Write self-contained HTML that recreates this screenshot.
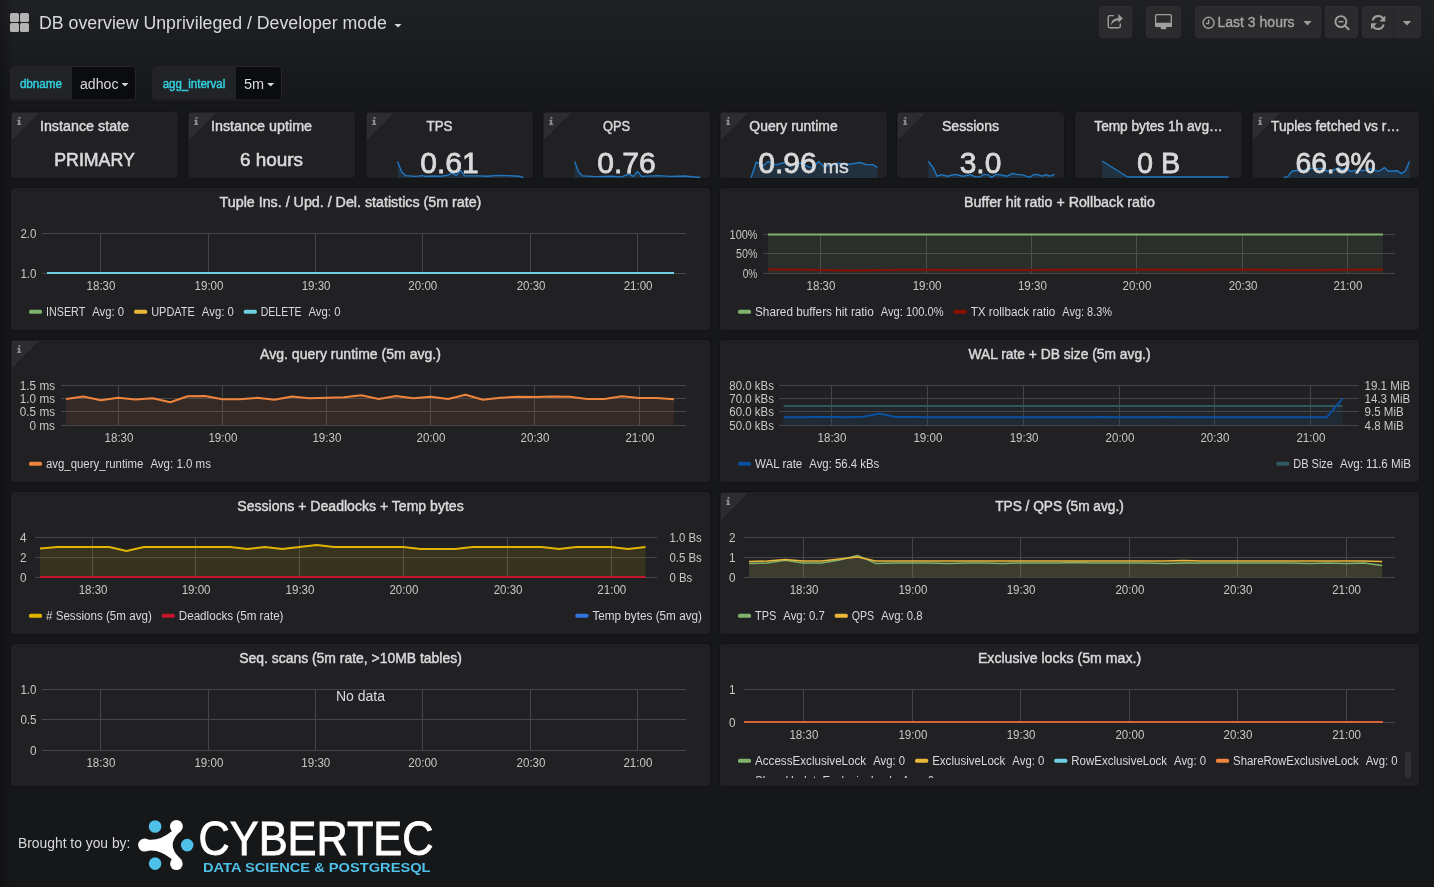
<!DOCTYPE html><html><head><meta charset="utf-8"><style>
html,body{margin:0;padding:0;}
body{width:1434px;height:887px;overflow:hidden;position:relative;background:#161719;font-family:"Liberation Sans",sans-serif;}
.bg{position:absolute;left:0;top:0;width:1434px;height:887px;background:linear-gradient(180deg,#1f2023 10px,#161719 100px);}
.sh{position:absolute;left:0;top:0;width:12px;height:887px;background:linear-gradient(90deg,rgba(0,0,0,0.25),rgba(0,0,0,0));}
svg{position:absolute;left:0;top:0;will-change:transform;}
text{font-family:"Liberation Sans",sans-serif;}
</style></head><body><div class="bg"></div><div class="sh"></div>
<svg width="1434" height="887" viewBox="0 0 1434 887">
<rect x="10" y="13" width="9" height="9" rx="1.5" fill="#b3b3b3"/>
<rect x="20" y="13" width="9" height="9" rx="1.5" fill="#b3b3b3"/>
<rect x="10" y="23" width="9" height="9" rx="1.5" fill="#b3b3b3"/>
<rect x="20" y="23" width="9" height="9" rx="1.5" fill="#b3b3b3"/>
<text x="39.00" y="29.00" font-size="18" text-anchor="start" fill="#d8d9da" font-weight="normal" textLength="347.91" lengthAdjust="spacingAndGlyphs" >DB overview Unprivileged / Developer mode</text>
<path d="M394.5,24 h7 l-3.5,3.5 z" fill="#d8d9da"/>
<rect x="1099.5" y="6.5" width="32" height="31" rx="2.5" fill="#2b2b2e" stroke="#2f2f32" stroke-width="1"/>
<rect x="1146.5" y="6.5" width="34" height="31" rx="2.5" fill="#2b2b2e" stroke="#2f2f32" stroke-width="1"/>
<rect x="1195.5" y="6.5" width="125" height="31" rx="2.5" fill="#2b2b2e" stroke="#2f2f32" stroke-width="1"/>
<rect x="1325.5" y="6.5" width="32" height="31" rx="2.5" fill="#2b2b2e" stroke="#2f2f32" stroke-width="1"/>
<rect x="1362.5" y="6.5" width="58" height="31" rx="2.5" fill="#2b2b2e" stroke="#2f2f32" stroke-width="1"/>
<rect x="1393" y="7" width="1" height="30" fill="#242427"/>
<path d="M1113.8,15.6 h-4 a1.6,1.6 0 0 0 -1.6,1.6 v8.9 a1.6,1.6 0 0 0 1.6,1.6 h8.9 a1.6,1.6 0 0 0 1.6,-1.6 v-2.6" fill="none" stroke="#9f9f9f" stroke-width="1.4"/>
<path d="M1111.2,25.6 C1110.8,20.2 1114,18.2 1118.4,18.2 V13.9 L1122.8,18.4 L1118.4,22.7 V20.5 C1115,20.5 1112.6,22 1111.2,25.6 Z" fill="#9f9f9f"/>
<rect x="1155.6" y="14.6" width="15.7" height="11.6" rx="1.4" fill="none" stroke="#9f9f9f" stroke-width="1.3"/>
<rect x="1155" y="22.8" width="17" height="4.3" rx="1" fill="#9f9f9f"/><rect x="1160.8" y="27" width="5.4" height="2.2" fill="#9f9f9f"/>
<circle cx="1208.6" cy="22.8" r="5.5" fill="none" stroke="#9f9f9f" stroke-width="1.4"/><path d="M1208.6,19.6 v3.9 h-2.6" fill="none" stroke="#9f9f9f" stroke-width="1.3"/>
<text x="1217.50" y="26.70" font-size="14" text-anchor="start" fill="#a6a6a6" font-weight="normal" stroke="#a6a6a6" stroke-width="0.35" textLength="77.10" lengthAdjust="spacingAndGlyphs" >Last 3 hours</text>
<path d="M1303.4,20.9 h8.1 l-4.05,4.5 z" fill="#9f9f9f"/>
<circle cx="1340.9" cy="21.6" r="5.5" fill="none" stroke="#9f9f9f" stroke-width="1.9"/><rect x="1338.3" y="20.9" width="5.2" height="1.5" fill="#9f9f9f"/><path d="M1345,25.7 l3.6,3.6" stroke="#9f9f9f" stroke-width="2" stroke-linecap="round"/>
<g fill="none" stroke="#9f9f9f" stroke-width="2.1"><path d="M1372.6,20.6 a5.8,5.8 0 0 1 10.6,-1.8"/><path d="M1383.6,24.4 a5.8,5.8 0 0 1 -10.6,1.8"/></g>
<path d="M1385.3,15.6 v6 h-6 z" fill="#9f9f9f"/><path d="M1371,29.2 v-6 h6 z" fill="#9f9f9f"/>
<path d="M1402.8,20.9 h8.3 l-4.15,4.5 z" fill="#9f9f9f"/>
<rect x="10.5" y="66.5" width="125" height="33.5" rx="3" fill="#0b0c0e" stroke="#262628" stroke-width="1"/>
<path d="M72,67 H13.5 a2.5,2.5 0 0 0 -2.5,2.5 V97 a2.5,2.5 0 0 0 2.5,2.5 H72 z" fill="#222327"/>
<text x="41.00" y="87.50" font-size="12" text-anchor="middle" fill="#32d1df" font-weight="normal" stroke="#32d1df" stroke-width="0.45" textLength="42.22" lengthAdjust="spacingAndGlyphs" >dbname</text>
<text x="80.00" y="89.00" font-size="14" text-anchor="start" fill="#d8d9da" font-weight="normal" textLength="38.53" lengthAdjust="spacingAndGlyphs" >adhoc</text>
<path d="M121.53,83 h7 l-3.5,3.5 z" fill="#d8d9da"/>
<rect x="152.5" y="66.5" width="129" height="33.5" rx="3" fill="#0b0c0e" stroke="#262628" stroke-width="1"/>
<path d="M236,67 H155.5 a2.5,2.5 0 0 0 -2.5,2.5 V97 a2.5,2.5 0 0 0 2.5,2.5 H236 z" fill="#222327"/>
<text x="194.00" y="87.50" font-size="12" text-anchor="middle" fill="#32d1df" font-weight="normal" stroke="#32d1df" stroke-width="0.45" textLength="62.58" lengthAdjust="spacingAndGlyphs" >agg_interval</text>
<text x="244.00" y="89.00" font-size="14" text-anchor="start" fill="#d8d9da" font-weight="normal" textLength="20.13" lengthAdjust="spacingAndGlyphs" >5m</text>
<path d="M267.13,83 h7 l-3.5,3.5 z" fill="#d8d9da"/>
<rect x="10.50" y="111.50" width="168.00" height="67.00" rx="3.5" fill="#212124" stroke="#131315" stroke-width="1"/>
<path d="M12,113 L39,113 L12,140 Z" fill="#2d2d31"/>
<g fill="#8e8e8e" transform="translate(17,117)"><rect x="1.5" y="0" width="2" height="1.8" rx="0.6"/><path d="M0.3,2.8 h2.9 v3.9 h0.9 v1.3 h-3.9 v-1.3 h0.9 v-2.6 h-0.8 z"/></g>
<text x="84.50" y="131.00" font-size="14" text-anchor="middle" fill="#d8d9da" font-weight="normal" stroke="#d8d9da" stroke-width="0.45" textLength="89.16" lengthAdjust="spacingAndGlyphs" >Instance state</text>
<text x="94.50" y="166.00" font-size="18" text-anchor="middle" fill="#d8d9da" font-weight="normal" stroke="#d8d9da" stroke-width="0.6" textLength="80.47" lengthAdjust="spacingAndGlyphs" >PRIMARY</text>
<rect x="187.50" y="111.50" width="168.00" height="67.00" rx="3.5" fill="#212124" stroke="#131315" stroke-width="1"/>
<path d="M189,113 L216,113 L189,140 Z" fill="#2d2d31"/>
<g fill="#8e8e8e" transform="translate(194,117)"><rect x="1.5" y="0" width="2" height="1.8" rx="0.6"/><path d="M0.3,2.8 h2.9 v3.9 h0.9 v1.3 h-3.9 v-1.3 h0.9 v-2.6 h-0.8 z"/></g>
<text x="261.50" y="131.00" font-size="14" text-anchor="middle" fill="#d8d9da" font-weight="normal" stroke="#d8d9da" stroke-width="0.45" textLength="101.11" lengthAdjust="spacingAndGlyphs" >Instance uptime</text>
<text x="271.50" y="166.00" font-size="18" text-anchor="middle" fill="#d8d9da" font-weight="normal" stroke="#d8d9da" stroke-width="0.6" textLength="63.04" lengthAdjust="spacingAndGlyphs" >6 hours</text>
<rect x="365.50" y="111.50" width="168.00" height="67.00" rx="3.5" fill="#212124" stroke="#131315" stroke-width="1"/>
<polygon points="397.60,161.50 401.70,172.00 405.60,175.60 409.50,175.90 415.40,176.40 422.20,175.60 426.10,176.40 432.00,176.00 440.80,176.20 447.60,175.20 452.00,173.20 456.40,175.60 460.30,170.30 464.70,175.90 477.90,175.90 487.70,176.20 497.40,175.40 507.20,175.60 518.90,176.20 523.30,177.50 523.30,178.00 397.60,178.00" fill="#1f78c1" fill-opacity="0.18"/>
<polyline points="397.60,161.50 401.70,172.00 405.60,175.60 409.50,175.90 415.40,176.40 422.20,175.60 426.10,176.40 432.00,176.00 440.80,176.20 447.60,175.20 452.00,173.20 456.40,175.60 460.30,170.30 464.70,175.90 477.90,175.90 487.70,176.20 497.40,175.40 507.20,175.60 518.90,176.20 523.30,177.50" fill="none" stroke="#1f78c1" stroke-width="1.4" stroke-linejoin="round"/>
<path d="M367,113 L394,113 L367,140 Z" fill="#2d2d31"/>
<g fill="#8e8e8e" transform="translate(372,117)"><rect x="1.5" y="0" width="2" height="1.8" rx="0.6"/><path d="M0.3,2.8 h2.9 v3.9 h0.9 v1.3 h-3.9 v-1.3 h0.9 v-2.6 h-0.8 z"/></g>
<text x="439.50" y="131.00" font-size="14" text-anchor="middle" fill="#d8d9da" font-weight="normal" stroke="#d8d9da" stroke-width="0.45" textLength="25.90" lengthAdjust="spacingAndGlyphs" >TPS</text>
<text x="449.50" y="172.80" font-size="29" text-anchor="middle" fill="#d8d9da" font-weight="normal" stroke="#d8d9da" stroke-width="0.8" textLength="58.57" lengthAdjust="spacingAndGlyphs" >0.61</text>
<rect x="542.50" y="111.50" width="168.00" height="67.00" rx="3.5" fill="#212124" stroke="#131315" stroke-width="1"/>
<polygon points="574.60,161.50 578.70,172.00 582.60,175.90 596.30,176.60 611.00,176.20 621.70,176.90 629.00,173.90 633.40,176.40 637.50,171.50 641.70,176.40 658.80,175.60 669.50,176.40 684.20,176.00 700.30,177.50 700.30,178.00 574.60,178.00" fill="#1f78c1" fill-opacity="0.18"/>
<polyline points="574.60,161.50 578.70,172.00 582.60,175.90 596.30,176.60 611.00,176.20 621.70,176.90 629.00,173.90 633.40,176.40 637.50,171.50 641.70,176.40 658.80,175.60 669.50,176.40 684.20,176.00 700.30,177.50" fill="none" stroke="#1f78c1" stroke-width="1.4" stroke-linejoin="round"/>
<path d="M544,113 L571,113 L544,140 Z" fill="#2d2d31"/>
<g fill="#8e8e8e" transform="translate(549,117)"><rect x="1.5" y="0" width="2" height="1.8" rx="0.6"/><path d="M0.3,2.8 h2.9 v3.9 h0.9 v1.3 h-3.9 v-1.3 h0.9 v-2.6 h-0.8 z"/></g>
<text x="616.50" y="131.00" font-size="14" text-anchor="middle" fill="#d8d9da" font-weight="normal" stroke="#d8d9da" stroke-width="0.45" textLength="27.13" lengthAdjust="spacingAndGlyphs" >QPS</text>
<text x="626.50" y="172.80" font-size="29" text-anchor="middle" fill="#d8d9da" font-weight="normal" stroke="#d8d9da" stroke-width="0.8" textLength="58.57" lengthAdjust="spacingAndGlyphs" >0.76</text>
<rect x="719.50" y="111.50" width="168.00" height="67.00" rx="3.5" fill="#212124" stroke="#131315" stroke-width="1"/>
<polygon points="751.00,177.80 756.20,162.20 759.10,163.20 763.50,165.60 768.40,161.20 772.30,164.60 776.20,164.60 785.00,162.50 789.90,166.10 795.80,162.70 802.60,163.50 807.50,166.40 812.40,168.10 818.70,161.50 824.10,167.10 829.00,165.60 837.80,163.20 849.50,164.20 860.20,162.50 866.10,164.60 872.90,164.60 877.30,167.60 877.30,178.00 751.00,178.00" fill="#1f78c1" fill-opacity="0.18"/>
<polyline points="751.00,177.80 756.20,162.20 759.10,163.20 763.50,165.60 768.40,161.20 772.30,164.60 776.20,164.60 785.00,162.50 789.90,166.10 795.80,162.70 802.60,163.50 807.50,166.40 812.40,168.10 818.70,161.50 824.10,167.10 829.00,165.60 837.80,163.20 849.50,164.20 860.20,162.50 866.10,164.60 872.90,164.60 877.30,167.60" fill="none" stroke="#1f78c1" stroke-width="1.4" stroke-linejoin="round"/>
<path d="M721,113 L748,113 L721,140 Z" fill="#2d2d31"/>
<g fill="#8e8e8e" transform="translate(726,117)"><rect x="1.5" y="0" width="2" height="1.8" rx="0.6"/><path d="M0.3,2.8 h2.9 v3.9 h0.9 v1.3 h-3.9 v-1.3 h0.9 v-2.6 h-0.8 z"/></g>
<text x="793.50" y="131.00" font-size="14" text-anchor="middle" fill="#d8d9da" font-weight="normal" stroke="#d8d9da" stroke-width="0.45" textLength="88.29" lengthAdjust="spacingAndGlyphs" >Query runtime</text>
<text x="758.19" y="172.80" font-size="29" text-anchor="start" fill="#d8d9da" font-weight="normal" stroke="#d8d9da" stroke-width="0.8" textLength="58.57" lengthAdjust="spacingAndGlyphs" >0.96</text>
<text x="822.75" y="172.80" font-size="18" text-anchor="start" fill="#d8d9da" font-weight="normal" stroke="#d8d9da" stroke-width="0.5" textLength="26.06" lengthAdjust="spacingAndGlyphs" >ms</text>
<rect x="896.50" y="111.50" width="168.00" height="67.00" rx="3.5" fill="#212124" stroke="#131315" stroke-width="1"/>
<polygon points="928.30,161.20 933.20,167.60 937.10,176.20 941.50,174.60 947.40,176.20 955.20,174.40 963.00,176.20 970.80,174.60 975.20,176.90 979.60,176.90 984.50,174.40 988.40,174.90 991.30,177.30 996.20,174.40 1001.10,174.90 1006.90,176.20 1012.80,173.40 1016.70,174.40 1022.60,174.90 1029.40,177.30 1034.30,174.40 1038.20,174.60 1042.10,176.20 1046.00,174.60 1049.90,176.20 1054.60,174.40 1054.60,178.00 928.30,178.00" fill="#1f78c1" fill-opacity="0.18"/>
<polyline points="928.30,161.20 933.20,167.60 937.10,176.20 941.50,174.60 947.40,176.20 955.20,174.40 963.00,176.20 970.80,174.60 975.20,176.90 979.60,176.90 984.50,174.40 988.40,174.90 991.30,177.30 996.20,174.40 1001.10,174.90 1006.90,176.20 1012.80,173.40 1016.70,174.40 1022.60,174.90 1029.40,177.30 1034.30,174.40 1038.20,174.60 1042.10,176.20 1046.00,174.60 1049.90,176.20 1054.60,174.40" fill="none" stroke="#1f78c1" stroke-width="1.4" stroke-linejoin="round"/>
<path d="M898,113 L925,113 L898,140 Z" fill="#2d2d31"/>
<g fill="#8e8e8e" transform="translate(903,117)"><rect x="1.5" y="0" width="2" height="1.8" rx="0.6"/><path d="M0.3,2.8 h2.9 v3.9 h0.9 v1.3 h-3.9 v-1.3 h0.9 v-2.6 h-0.8 z"/></g>
<text x="970.50" y="131.00" font-size="14" text-anchor="middle" fill="#d8d9da" font-weight="normal" stroke="#d8d9da" stroke-width="0.45" textLength="57.16" lengthAdjust="spacingAndGlyphs" >Sessions</text>
<text x="980.50" y="172.80" font-size="29" text-anchor="middle" fill="#d8d9da" font-weight="normal" stroke="#d8d9da" stroke-width="0.8" textLength="41.63" lengthAdjust="spacingAndGlyphs" >3.0</text>
<rect x="1074.50" y="111.50" width="168.00" height="67.00" rx="3.5" fill="#212124" stroke="#131315" stroke-width="1"/>
<polygon points="1102.10,161.00 1127.60,177.00 1228.60,177.00 1228.60,178.00 1102.10,178.00" fill="#1f78c1" fill-opacity="0.18"/>
<polyline points="1102.10,161.00 1127.60,177.00 1228.60,177.00" fill="none" stroke="#1f78c1" stroke-width="1.4" stroke-linejoin="round"/>
<text x="1158.50" y="131.00" font-size="14" text-anchor="middle" fill="#d8d9da" font-weight="normal" stroke="#d8d9da" stroke-width="0.45" textLength="128.35" lengthAdjust="spacingAndGlyphs" >Temp bytes 1h avg…</text>
<text x="1158.50" y="172.80" font-size="29" text-anchor="middle" fill="#d8d9da" font-weight="normal" stroke="#d8d9da" stroke-width="0.8" textLength="43.18" lengthAdjust="spacingAndGlyphs" >0 B</text>
<rect x="1251.50" y="111.50" width="168.00" height="67.00" rx="3.5" fill="#212124" stroke="#131315" stroke-width="1"/>
<polygon points="1283.80,177.50 1287.70,176.60 1292.10,171.00 1297.50,170.50 1303.30,170.50 1311.20,168.10 1315.10,169.00 1320.90,168.10 1324.80,170.50 1330.70,171.50 1338.50,167.60 1342.40,170.00 1347.30,167.60 1350.20,171.50 1359.00,170.00 1363.90,170.70 1371.70,168.40 1375.60,170.70 1379.50,171.00 1384.40,167.60 1388.30,171.30 1397.10,170.70 1401.50,173.60 1405.40,170.70 1409.60,161.20 1409.60,178.00 1283.80,178.00" fill="#1f78c1" fill-opacity="0.18"/>
<polyline points="1283.80,177.50 1287.70,176.60 1292.10,171.00 1297.50,170.50 1303.30,170.50 1311.20,168.10 1315.10,169.00 1320.90,168.10 1324.80,170.50 1330.70,171.50 1338.50,167.60 1342.40,170.00 1347.30,167.60 1350.20,171.50 1359.00,170.00 1363.90,170.70 1371.70,168.40 1375.60,170.70 1379.50,171.00 1384.40,167.60 1388.30,171.30 1397.10,170.70 1401.50,173.60 1405.40,170.70 1409.60,161.20" fill="none" stroke="#1f78c1" stroke-width="1.4" stroke-linejoin="round"/>
<path d="M1253,113 L1280,113 L1253,140 Z" fill="#2d2d31"/>
<g fill="#8e8e8e" transform="translate(1258,117)"><rect x="1.5" y="0" width="2" height="1.8" rx="0.6"/><path d="M0.3,2.8 h2.9 v3.9 h0.9 v1.3 h-3.9 v-1.3 h0.9 v-2.6 h-0.8 z"/></g>
<text x="1335.50" y="131.00" font-size="14" text-anchor="middle" fill="#d8d9da" font-weight="normal" stroke="#d8d9da" stroke-width="0.45" textLength="128.85" lengthAdjust="spacingAndGlyphs" >Tuples fetched vs r…</text>
<text x="1335.50" y="172.80" font-size="29" text-anchor="middle" fill="#d8d9da" font-weight="normal" stroke="#d8d9da" stroke-width="0.8" textLength="80.14" lengthAdjust="spacingAndGlyphs" >66.9%</text>
<rect x="10.50" y="187.50" width="700.00" height="143.00" rx="3.5" fill="#212124" stroke="#131315" stroke-width="1"/>
<rect x="719.50" y="187.50" width="700.00" height="143.00" rx="3.5" fill="#212124" stroke="#131315" stroke-width="1"/>
<rect x="10.50" y="339.50" width="700.00" height="143.00" rx="3.5" fill="#212124" stroke="#131315" stroke-width="1"/>
<rect x="719.50" y="339.50" width="700.00" height="143.00" rx="3.5" fill="#212124" stroke="#131315" stroke-width="1"/>
<rect x="10.50" y="491.50" width="700.00" height="143.00" rx="3.5" fill="#212124" stroke="#131315" stroke-width="1"/>
<rect x="719.50" y="491.50" width="700.00" height="143.00" rx="3.5" fill="#212124" stroke="#131315" stroke-width="1"/>
<rect x="10.50" y="643.50" width="700.00" height="143.00" rx="3.5" fill="#212124" stroke="#131315" stroke-width="1"/>
<rect x="719.50" y="643.50" width="700.00" height="143.00" rx="3.5" fill="#212124" stroke="#131315" stroke-width="1"/>
<text x="350.50" y="207.20" font-size="14" text-anchor="middle" fill="#d8d9da" font-weight="normal" stroke="#d8d9da" stroke-width="0.45" textLength="261.77" lengthAdjust="spacingAndGlyphs" >Tuple Ins. / Upd. / Del. statistics (5m rate)</text>
<rect x="42" y="233" width="644" height="1" fill="#464648"/>
<rect x="42" y="273" width="644" height="1" fill="#464648"/>
<rect x="100" y="233" width="1" height="40" fill="#464648"/>
<rect x="208" y="233" width="1" height="40" fill="#464648"/>
<rect x="315" y="233" width="1" height="40" fill="#464648"/>
<rect x="422" y="233" width="1" height="40" fill="#464648"/>
<rect x="530" y="233" width="1" height="40" fill="#464648"/>
<rect x="637" y="233" width="1" height="40" fill="#464648"/>
<text x="36.50" y="237.80" font-size="12" text-anchor="end" fill="#c8c8c8" font-weight="normal" textLength="16.07" lengthAdjust="spacingAndGlyphs" >2.0</text>
<text x="36.50" y="277.80" font-size="12" text-anchor="end" fill="#c8c8c8" font-weight="normal" textLength="16.07" lengthAdjust="spacingAndGlyphs" >1.0</text>
<text x="101.00" y="290.30" font-size="12" text-anchor="middle" fill="#c8c8c8" font-weight="normal" textLength="28.90" lengthAdjust="spacingAndGlyphs" >18:30</text>
<text x="209.00" y="290.30" font-size="12" text-anchor="middle" fill="#c8c8c8" font-weight="normal" textLength="28.90" lengthAdjust="spacingAndGlyphs" >19:00</text>
<text x="316.10" y="290.30" font-size="12" text-anchor="middle" fill="#c8c8c8" font-weight="normal" textLength="28.90" lengthAdjust="spacingAndGlyphs" >19:30</text>
<text x="422.80" y="290.30" font-size="12" text-anchor="middle" fill="#c8c8c8" font-weight="normal" textLength="28.90" lengthAdjust="spacingAndGlyphs" >20:00</text>
<text x="531.10" y="290.30" font-size="12" text-anchor="middle" fill="#c8c8c8" font-weight="normal" textLength="28.90" lengthAdjust="spacingAndGlyphs" >20:30</text>
<text x="638.10" y="290.30" font-size="12" text-anchor="middle" fill="#c8c8c8" font-weight="normal" textLength="28.90" lengthAdjust="spacingAndGlyphs" >21:00</text>
<rect x="47" y="272" width="627" height="2" fill="#6ed0e0"/>
<rect x="29.00" y="309.80" width="13" height="4" rx="1.5" fill="#7eb26d"/>
<text x="46.00" y="316.10" font-size="12" text-anchor="start" fill="#d8d9da" font-weight="normal" textLength="39.21" lengthAdjust="spacingAndGlyphs" >INSERT</text>
<text x="92.21" y="316.10" font-size="12" text-anchor="start" fill="#d8d9da" font-weight="normal" textLength="31.94" lengthAdjust="spacingAndGlyphs" >Avg: 0</text>
<rect x="134.15" y="309.80" width="13" height="4" rx="1.5" fill="#eab839"/>
<text x="151.15" y="316.10" font-size="12" text-anchor="start" fill="#d8d9da" font-weight="normal" textLength="43.71" lengthAdjust="spacingAndGlyphs" >UPDATE</text>
<text x="201.86" y="316.10" font-size="12" text-anchor="start" fill="#d8d9da" font-weight="normal" textLength="31.94" lengthAdjust="spacingAndGlyphs" >Avg: 0</text>
<rect x="243.80" y="309.80" width="13" height="4" rx="1.5" fill="#6ed0e0"/>
<text x="260.80" y="316.10" font-size="12" text-anchor="start" fill="#d8d9da" font-weight="normal" textLength="40.73" lengthAdjust="spacingAndGlyphs" >DELETE</text>
<text x="308.52" y="316.10" font-size="12" text-anchor="start" fill="#d8d9da" font-weight="normal" textLength="31.94" lengthAdjust="spacingAndGlyphs" >Avg: 0</text>
<text x="1059.50" y="207.20" font-size="14" text-anchor="middle" fill="#d8d9da" font-weight="normal" stroke="#d8d9da" stroke-width="0.45" textLength="190.86" lengthAdjust="spacingAndGlyphs" >Buffer hit ratio + Rollback ratio</text>
<rect x="763" y="234" width="632" height="1" fill="#464648"/>
<rect x="763" y="253" width="632" height="1" fill="#464648"/>
<rect x="763" y="273" width="632" height="1" fill="#464648"/>
<rect x="820" y="234" width="1" height="39" fill="#464648"/>
<rect x="926" y="234" width="1" height="39" fill="#464648"/>
<rect x="1031" y="234" width="1" height="39" fill="#464648"/>
<rect x="1136" y="234" width="1" height="39" fill="#464648"/>
<rect x="1242" y="234" width="1" height="39" fill="#464648"/>
<rect x="1347" y="234" width="1" height="39" fill="#464648"/>
<rect x="768" y="234" width="615" height="39" fill="#7eb26d" fill-opacity="0.1"/>
<rect x="768" y="270" width="615" height="3" fill="#890f02" fill-opacity="0.1"/>
<rect x="768" y="233.5" width="615" height="2" fill="#7eb26d"/>
<polyline points="768.00,269.20 810.00,269.80 850.00,270.60 900.00,269.80 1000.00,270.00 1100.00,269.50 1200.00,269.80 1240.00,269.40 1300.00,269.90 1383.00,269.60" fill="none" stroke="#890f02" stroke-width="2" stroke-linejoin="round"/>
<text x="757.50" y="239.30" font-size="12" text-anchor="end" fill="#c8c8c8" font-weight="normal" textLength="27.93" lengthAdjust="spacingAndGlyphs" >100%</text>
<text x="757.50" y="258.20" font-size="12" text-anchor="end" fill="#c8c8c8" font-weight="normal" textLength="21.40" lengthAdjust="spacingAndGlyphs" >50%</text>
<text x="757.50" y="277.80" font-size="12" text-anchor="end" fill="#c8c8c8" font-weight="normal" textLength="14.86" lengthAdjust="spacingAndGlyphs" >0%</text>
<text x="821.00" y="290.30" font-size="12" text-anchor="middle" fill="#c8c8c8" font-weight="normal" textLength="28.90" lengthAdjust="spacingAndGlyphs" >18:30</text>
<text x="927.10" y="290.30" font-size="12" text-anchor="middle" fill="#c8c8c8" font-weight="normal" textLength="28.90" lengthAdjust="spacingAndGlyphs" >19:00</text>
<text x="1032.40" y="290.30" font-size="12" text-anchor="middle" fill="#c8c8c8" font-weight="normal" textLength="28.90" lengthAdjust="spacingAndGlyphs" >19:30</text>
<text x="1137.00" y="290.30" font-size="12" text-anchor="middle" fill="#c8c8c8" font-weight="normal" textLength="28.90" lengthAdjust="spacingAndGlyphs" >20:00</text>
<text x="1243.10" y="290.30" font-size="12" text-anchor="middle" fill="#c8c8c8" font-weight="normal" textLength="28.90" lengthAdjust="spacingAndGlyphs" >20:30</text>
<text x="1347.90" y="290.30" font-size="12" text-anchor="middle" fill="#c8c8c8" font-weight="normal" textLength="28.90" lengthAdjust="spacingAndGlyphs" >21:00</text>
<rect x="738.00" y="309.80" width="13" height="4" rx="1.5" fill="#7eb26d"/>
<text x="755.00" y="316.10" font-size="12" text-anchor="start" fill="#d8d9da" font-weight="normal" textLength="118.76" lengthAdjust="spacingAndGlyphs" >Shared buffers hit ratio</text>
<text x="880.76" y="316.10" font-size="12" text-anchor="start" fill="#d8d9da" font-weight="normal" textLength="62.87" lengthAdjust="spacingAndGlyphs" >Avg: 100.0%</text>
<rect x="953.63" y="309.80" width="13" height="4" rx="1.5" fill="#890f02"/>
<text x="970.63" y="316.10" font-size="12" text-anchor="start" fill="#d8d9da" font-weight="normal" textLength="84.66" lengthAdjust="spacingAndGlyphs" >TX rollback ratio</text>
<text x="1062.29" y="316.10" font-size="12" text-anchor="start" fill="#d8d9da" font-weight="normal" textLength="49.79" lengthAdjust="spacingAndGlyphs" >Avg: 8.3%</text>
<path d="M12,341 L39,341 L12,368 Z" fill="#2d2d31"/>
<g fill="#8e8e8e" transform="translate(17,345)"><rect x="1.5" y="0" width="2" height="1.8" rx="0.6"/><path d="M0.3,2.8 h2.9 v3.9 h0.9 v1.3 h-3.9 v-1.3 h0.9 v-2.6 h-0.8 z"/></g>
<text x="350.50" y="359.20" font-size="14" text-anchor="middle" fill="#d8d9da" font-weight="normal" stroke="#d8d9da" stroke-width="0.45" textLength="180.73" lengthAdjust="spacingAndGlyphs" >Avg. query runtime (5m avg.)</text>
<rect x="61" y="385" width="625" height="1" fill="#464648"/>
<rect x="61" y="398" width="625" height="1" fill="#464648"/>
<rect x="61" y="411" width="625" height="1" fill="#464648"/>
<rect x="61" y="425" width="625" height="1" fill="#464648"/>
<rect x="118" y="385" width="1" height="40" fill="#464648"/>
<rect x="222" y="385" width="1" height="40" fill="#464648"/>
<rect x="326" y="385" width="1" height="40" fill="#464648"/>
<rect x="430" y="385" width="1" height="40" fill="#464648"/>
<rect x="534" y="385" width="1" height="40" fill="#464648"/>
<rect x="639" y="385" width="1" height="40" fill="#464648"/>
<polygon points="66.00,399.00 83.37,396.50 100.74,400.30 118.11,397.80 135.49,399.50 152.86,398.30 170.23,402.30 187.60,396.30 204.97,396.00 222.34,399.30 239.71,399.30 257.09,397.80 274.46,399.80 291.83,396.50 309.20,398.30 326.57,397.80 343.94,397.30 361.31,395.30 378.69,399.00 396.06,396.00 413.43,398.30 430.80,396.80 448.17,399.00 465.54,394.80 482.91,399.80 500.29,397.80 517.66,396.80 535.03,397.00 552.40,396.50 569.77,396.80 587.14,399.00 604.51,399.00 621.89,396.30 639.26,398.00 656.63,398.00 674.00,399.30 674.00,425.00 66.00,425.00" fill="#ef843c" fill-opacity="0.1"/>
<polyline points="66.00,399.00 83.37,396.50 100.74,400.30 118.11,397.80 135.49,399.50 152.86,398.30 170.23,402.30 187.60,396.30 204.97,396.00 222.34,399.30 239.71,399.30 257.09,397.80 274.46,399.80 291.83,396.50 309.20,398.30 326.57,397.80 343.94,397.30 361.31,395.30 378.69,399.00 396.06,396.00 413.43,398.30 430.80,396.80 448.17,399.00 465.54,394.80 482.91,399.80 500.29,397.80 517.66,396.80 535.03,397.00 552.40,396.50 569.77,396.80 587.14,399.00 604.51,399.00 621.89,396.30 639.26,398.00 656.63,398.00 674.00,399.30" fill="none" stroke="#ef843c" stroke-width="2" stroke-linejoin="round"/>
<text x="55.00" y="389.80" font-size="12" text-anchor="end" fill="#c8c8c8" font-weight="normal" textLength="35.15" lengthAdjust="spacingAndGlyphs" >1.5 ms</text>
<text x="55.00" y="402.80" font-size="12" text-anchor="end" fill="#c8c8c8" font-weight="normal" textLength="35.15" lengthAdjust="spacingAndGlyphs" >1.0 ms</text>
<text x="55.00" y="415.80" font-size="12" text-anchor="end" fill="#c8c8c8" font-weight="normal" textLength="35.15" lengthAdjust="spacingAndGlyphs" >0.5 ms</text>
<text x="55.00" y="429.80" font-size="12" text-anchor="end" fill="#c8c8c8" font-weight="normal" textLength="25.62" lengthAdjust="spacingAndGlyphs" >0 ms</text>
<text x="119.00" y="442.30" font-size="12" text-anchor="middle" fill="#c8c8c8" font-weight="normal" textLength="28.90" lengthAdjust="spacingAndGlyphs" >18:30</text>
<text x="222.90" y="442.30" font-size="12" text-anchor="middle" fill="#c8c8c8" font-weight="normal" textLength="28.90" lengthAdjust="spacingAndGlyphs" >19:00</text>
<text x="326.90" y="442.30" font-size="12" text-anchor="middle" fill="#c8c8c8" font-weight="normal" textLength="28.90" lengthAdjust="spacingAndGlyphs" >19:30</text>
<text x="431.00" y="442.30" font-size="12" text-anchor="middle" fill="#c8c8c8" font-weight="normal" textLength="28.90" lengthAdjust="spacingAndGlyphs" >20:00</text>
<text x="535.00" y="442.30" font-size="12" text-anchor="middle" fill="#c8c8c8" font-weight="normal" textLength="28.90" lengthAdjust="spacingAndGlyphs" >20:30</text>
<text x="639.90" y="442.30" font-size="12" text-anchor="middle" fill="#c8c8c8" font-weight="normal" textLength="28.90" lengthAdjust="spacingAndGlyphs" >21:00</text>
<rect x="29.00" y="461.80" width="13" height="4" rx="1.5" fill="#ef843c"/>
<text x="46.00" y="468.10" font-size="12" text-anchor="start" fill="#d8d9da" font-weight="normal" textLength="97.40" lengthAdjust="spacingAndGlyphs" >avg_query_runtime</text>
<text x="150.40" y="468.10" font-size="12" text-anchor="start" fill="#d8d9da" font-weight="normal" textLength="60.55" lengthAdjust="spacingAndGlyphs" >Avg: 1.0 ms</text>
<text x="1059.50" y="359.20" font-size="14" text-anchor="middle" fill="#d8d9da" font-weight="normal" stroke="#d8d9da" stroke-width="0.45" textLength="182.05" lengthAdjust="spacingAndGlyphs" >WAL rate + DB size (5m avg.)</text>
<rect x="779" y="385" width="580" height="1" fill="#464648"/>
<rect x="779" y="398" width="580" height="1" fill="#464648"/>
<rect x="779" y="411" width="580" height="1" fill="#464648"/>
<rect x="779" y="425" width="580" height="1" fill="#464648"/>
<rect x="831" y="385" width="1" height="40" fill="#464648"/>
<rect x="927" y="385" width="1" height="40" fill="#464648"/>
<rect x="1023" y="385" width="1" height="40" fill="#464648"/>
<rect x="1119" y="385" width="1" height="40" fill="#464648"/>
<rect x="1214" y="385" width="1" height="40" fill="#464648"/>
<rect x="1310" y="385" width="1" height="40" fill="#464648"/>
<polygon points="783.60,417.30 799.57,417.30 815.54,417.00 831.51,417.00 847.49,417.30 863.46,416.80 879.43,413.50 895.40,417.00 911.37,417.00 927.34,417.30 943.31,417.30 959.29,417.30 975.26,417.30 991.23,417.30 1007.20,417.30 1023.17,417.30 1039.14,417.30 1055.11,417.30 1071.09,417.30 1087.06,417.30 1103.03,417.00 1119.00,417.30 1134.97,417.30 1150.94,417.30 1166.91,417.00 1182.89,417.30 1198.86,417.30 1214.83,417.30 1230.80,417.30 1246.77,417.30 1262.74,417.30 1278.71,417.30 1294.69,417.30 1310.66,417.30 1326.63,417.30 1326.80,417.30 1342.60,398.30 1342.60,425.00 783.60,425.00" fill="#0a50a1" fill-opacity="0.1"/>
<rect x="783.6" y="406" width="559" height="19" fill="#2f575e" fill-opacity="0.1"/>
<rect x="783.6" y="405" width="559" height="2" fill="#2f575e"/>
<polyline points="783.60,417.30 799.57,417.30 815.54,417.00 831.51,417.00 847.49,417.30 863.46,416.80 879.43,413.50 895.40,417.00 911.37,417.00 927.34,417.30 943.31,417.30 959.29,417.30 975.26,417.30 991.23,417.30 1007.20,417.30 1023.17,417.30 1039.14,417.30 1055.11,417.30 1071.09,417.30 1087.06,417.30 1103.03,417.00 1119.00,417.30 1134.97,417.30 1150.94,417.30 1166.91,417.00 1182.89,417.30 1198.86,417.30 1214.83,417.30 1230.80,417.30 1246.77,417.30 1262.74,417.30 1278.71,417.30 1294.69,417.30 1310.66,417.30 1326.63,417.30 1326.80,417.30 1342.60,398.30" fill="none" stroke="#0a50a1" stroke-width="2" stroke-linejoin="round"/>
<text x="774.00" y="389.80" font-size="12" text-anchor="end" fill="#c8c8c8" font-weight="normal" textLength="44.63" lengthAdjust="spacingAndGlyphs" >80.0 kBs</text>
<text x="774.00" y="402.80" font-size="12" text-anchor="end" fill="#c8c8c8" font-weight="normal" textLength="44.63" lengthAdjust="spacingAndGlyphs" >70.0 kBs</text>
<text x="774.00" y="415.80" font-size="12" text-anchor="end" fill="#c8c8c8" font-weight="normal" textLength="44.63" lengthAdjust="spacingAndGlyphs" >60.0 kBs</text>
<text x="774.00" y="429.80" font-size="12" text-anchor="end" fill="#c8c8c8" font-weight="normal" textLength="44.63" lengthAdjust="spacingAndGlyphs" >50.0 kBs</text>
<text x="1364.50" y="389.80" font-size="12" text-anchor="start" fill="#c8c8c8" font-weight="normal" textLength="45.72" lengthAdjust="spacingAndGlyphs" >19.1 MiB</text>
<text x="1364.50" y="402.80" font-size="12" text-anchor="start" fill="#c8c8c8" font-weight="normal" textLength="45.72" lengthAdjust="spacingAndGlyphs" >14.3 MiB</text>
<text x="1364.50" y="415.80" font-size="12" text-anchor="start" fill="#c8c8c8" font-weight="normal" textLength="39.18" lengthAdjust="spacingAndGlyphs" >9.5 MiB</text>
<text x="1364.50" y="429.80" font-size="12" text-anchor="start" fill="#c8c8c8" font-weight="normal" textLength="39.18" lengthAdjust="spacingAndGlyphs" >4.8 MiB</text>
<text x="832.00" y="442.30" font-size="12" text-anchor="middle" fill="#c8c8c8" font-weight="normal" textLength="28.90" lengthAdjust="spacingAndGlyphs" >18:30</text>
<text x="927.90" y="442.30" font-size="12" text-anchor="middle" fill="#c8c8c8" font-weight="normal" textLength="28.90" lengthAdjust="spacingAndGlyphs" >19:00</text>
<text x="1024.10" y="442.30" font-size="12" text-anchor="middle" fill="#c8c8c8" font-weight="normal" textLength="28.90" lengthAdjust="spacingAndGlyphs" >19:30</text>
<text x="1120.00" y="442.30" font-size="12" text-anchor="middle" fill="#c8c8c8" font-weight="normal" textLength="28.90" lengthAdjust="spacingAndGlyphs" >20:00</text>
<text x="1214.90" y="442.30" font-size="12" text-anchor="middle" fill="#c8c8c8" font-weight="normal" textLength="28.90" lengthAdjust="spacingAndGlyphs" >20:30</text>
<text x="1310.90" y="442.30" font-size="12" text-anchor="middle" fill="#c8c8c8" font-weight="normal" textLength="28.90" lengthAdjust="spacingAndGlyphs" >21:00</text>
<rect x="738.00" y="461.80" width="13" height="4" rx="1.5" fill="#0a50a1"/>
<text x="755.00" y="468.10" font-size="12" text-anchor="start" fill="#d8d9da" font-weight="normal" textLength="47.29" lengthAdjust="spacingAndGlyphs" >WAL rate</text>
<text x="809.29" y="468.10" font-size="12" text-anchor="start" fill="#d8d9da" font-weight="normal" textLength="70.03" lengthAdjust="spacingAndGlyphs" >Avg: 56.4 kBs</text>
<rect x="1276.36" y="461.80" width="13" height="4" rx="1.5" fill="#2f575e"/>
<text x="1293.36" y="468.10" font-size="12" text-anchor="start" fill="#d8d9da" font-weight="normal" textLength="39.52" lengthAdjust="spacingAndGlyphs" >DB Size</text>
<text x="1339.88" y="468.10" font-size="12" text-anchor="start" fill="#d8d9da" font-weight="normal" textLength="71.12" lengthAdjust="spacingAndGlyphs" >Avg: 11.6 MiB</text>
<text x="350.50" y="511.20" font-size="14" text-anchor="middle" fill="#d8d9da" font-weight="normal" stroke="#d8d9da" stroke-width="0.45" textLength="226.43" lengthAdjust="spacingAndGlyphs" >Sessions + Deadlocks + Temp bytes</text>
<rect x="35" y="537" width="622" height="1" fill="#464648"/>
<rect x="35" y="557" width="622" height="1" fill="#464648"/>
<rect x="35" y="577" width="622" height="1" fill="#464648"/>
<rect x="92" y="537" width="1" height="40" fill="#464648"/>
<rect x="195" y="537" width="1" height="40" fill="#464648"/>
<rect x="299" y="537" width="1" height="40" fill="#464648"/>
<rect x="403" y="537" width="1" height="40" fill="#464648"/>
<rect x="507" y="537" width="1" height="40" fill="#464648"/>
<rect x="611" y="537" width="1" height="40" fill="#464648"/>
<polygon points="40.00,548.50 57.30,547.00 74.60,547.00 91.90,547.00 109.20,547.00 126.50,551.00 143.80,547.00 161.10,547.00 178.40,547.00 195.70,547.00 213.00,547.00 230.30,547.00 247.60,549.00 264.90,547.00 282.20,549.00 299.50,547.00 316.80,545.00 334.10,547.00 351.40,547.00 368.70,547.00 386.00,547.00 403.30,547.00 420.60,549.00 437.90,549.00 455.20,549.00 472.50,547.00 489.80,547.00 507.10,547.00 524.40,547.00 541.70,547.00 559.00,549.00 576.30,547.00 593.60,547.00 610.90,547.00 628.20,549.00 645.50,547.00 645.50,577.00 40.00,577.00" fill="#e0b400" fill-opacity="0.12"/>
<polyline points="40.00,548.50 57.30,547.00 74.60,547.00 91.90,547.00 109.20,547.00 126.50,551.00 143.80,547.00 161.10,547.00 178.40,547.00 195.70,547.00 213.00,547.00 230.30,547.00 247.60,549.00 264.90,547.00 282.20,549.00 299.50,547.00 316.80,545.00 334.10,547.00 351.40,547.00 368.70,547.00 386.00,547.00 403.30,547.00 420.60,549.00 437.90,549.00 455.20,549.00 472.50,547.00 489.80,547.00 507.10,547.00 524.40,547.00 541.70,547.00 559.00,549.00 576.30,547.00 593.60,547.00 610.90,547.00 628.20,549.00 645.50,547.00" fill="none" stroke="#e0b400" stroke-width="2" stroke-linejoin="round"/>
<rect x="40" y="576" width="605.5" height="2" fill="#c4162a"/>
<text x="26.50" y="541.80" font-size="12" text-anchor="end" fill="#c8c8c8" font-weight="normal" textLength="6.54" lengthAdjust="spacingAndGlyphs" >4</text>
<text x="26.50" y="561.80" font-size="12" text-anchor="end" fill="#c8c8c8" font-weight="normal" textLength="6.54" lengthAdjust="spacingAndGlyphs" >2</text>
<text x="26.50" y="581.80" font-size="12" text-anchor="end" fill="#c8c8c8" font-weight="normal" textLength="6.54" lengthAdjust="spacingAndGlyphs" >0</text>
<text x="669.50" y="541.80" font-size="12" text-anchor="start" fill="#c8c8c8" font-weight="normal" textLength="32.20" lengthAdjust="spacingAndGlyphs" >1.0 Bs</text>
<text x="669.50" y="561.80" font-size="12" text-anchor="start" fill="#c8c8c8" font-weight="normal" textLength="32.20" lengthAdjust="spacingAndGlyphs" >0.5 Bs</text>
<text x="669.50" y="581.80" font-size="12" text-anchor="start" fill="#c8c8c8" font-weight="normal" textLength="22.67" lengthAdjust="spacingAndGlyphs" >0 Bs</text>
<text x="93.10" y="594.30" font-size="12" text-anchor="middle" fill="#c8c8c8" font-weight="normal" textLength="28.90" lengthAdjust="spacingAndGlyphs" >18:30</text>
<text x="196.10" y="594.30" font-size="12" text-anchor="middle" fill="#c8c8c8" font-weight="normal" textLength="28.90" lengthAdjust="spacingAndGlyphs" >19:00</text>
<text x="300.00" y="594.30" font-size="12" text-anchor="middle" fill="#c8c8c8" font-weight="normal" textLength="28.90" lengthAdjust="spacingAndGlyphs" >19:30</text>
<text x="403.90" y="594.30" font-size="12" text-anchor="middle" fill="#c8c8c8" font-weight="normal" textLength="28.90" lengthAdjust="spacingAndGlyphs" >20:00</text>
<text x="508.10" y="594.30" font-size="12" text-anchor="middle" fill="#c8c8c8" font-weight="normal" textLength="28.90" lengthAdjust="spacingAndGlyphs" >20:30</text>
<text x="611.80" y="594.30" font-size="12" text-anchor="middle" fill="#c8c8c8" font-weight="normal" textLength="28.90" lengthAdjust="spacingAndGlyphs" >21:00</text>
<rect x="29.00" y="613.80" width="13" height="4" rx="1.5" fill="#e0b400"/>
<text x="46.00" y="620.10" font-size="12" text-anchor="start" fill="#d8d9da" font-weight="normal" textLength="105.78" lengthAdjust="spacingAndGlyphs" ># Sessions (5m avg)</text>
<rect x="161.78" y="613.80" width="13" height="4" rx="1.5" fill="#c4162a"/>
<text x="178.78" y="620.10" font-size="12" text-anchor="start" fill="#d8d9da" font-weight="normal" textLength="104.74" lengthAdjust="spacingAndGlyphs" >Deadlocks (5m rate)</text>
<rect x="575.38" y="613.80" width="13" height="4" rx="1.5" fill="#3274d9"/>
<text x="592.38" y="620.10" font-size="12" text-anchor="start" fill="#d8d9da" font-weight="normal" textLength="109.62" lengthAdjust="spacingAndGlyphs" >Temp bytes (5m avg)</text>
<path d="M721,493 L748,493 L721,520 Z" fill="#2d2d31"/>
<g fill="#8e8e8e" transform="translate(726,497)"><rect x="1.5" y="0" width="2" height="1.8" rx="0.6"/><path d="M0.3,2.8 h2.9 v3.9 h0.9 v1.3 h-3.9 v-1.3 h0.9 v-2.6 h-0.8 z"/></g>
<text x="1059.50" y="511.20" font-size="14" text-anchor="middle" fill="#d8d9da" font-weight="normal" stroke="#d8d9da" stroke-width="0.45" textLength="128.70" lengthAdjust="spacingAndGlyphs" >TPS / QPS (5m avg.)</text>
<rect x="744" y="537" width="651" height="1" fill="#464648"/>
<rect x="744" y="557" width="651" height="1" fill="#464648"/>
<rect x="744" y="577" width="651" height="1" fill="#464648"/>
<rect x="803" y="537" width="1" height="40" fill="#464648"/>
<rect x="912" y="537" width="1" height="40" fill="#464648"/>
<rect x="1020" y="537" width="1" height="40" fill="#464648"/>
<rect x="1129" y="537" width="1" height="40" fill="#464648"/>
<rect x="1237" y="537" width="1" height="40" fill="#464648"/>
<rect x="1346" y="537" width="1" height="40" fill="#464648"/>
<polygon points="749.00,561.60 767.09,561.00 785.18,559.40 803.27,561.00 821.37,561.00 839.46,559.00 857.55,557.00 875.64,561.00 893.73,561.00 911.82,561.00 929.91,561.00 948.01,561.00 966.10,561.00 984.19,561.00 1002.28,561.00 1020.37,561.00 1038.46,561.00 1056.55,561.00 1074.65,561.00 1092.74,561.00 1110.83,561.00 1128.92,561.00 1147.01,561.00 1165.10,561.00 1183.19,560.60 1201.29,561.00 1219.38,561.00 1237.47,561.00 1255.56,561.00 1273.65,561.00 1291.74,561.00 1309.83,561.00 1327.93,561.00 1346.02,561.00 1364.11,561.00 1382.20,561.60 1382.20,577.00 749.00,577.00" fill="#eab839" fill-opacity="0.1"/>
<polygon points="749.00,563.60 767.09,563.00 785.18,560.20 803.27,563.00 821.37,563.00 839.46,560.00 857.55,555.40 875.64,563.40 893.73,563.00 911.82,563.00 929.91,563.00 948.01,563.40 966.10,563.00 984.19,563.00 1002.28,563.40 1020.37,563.00 1038.46,563.00 1056.55,563.00 1074.65,562.60 1092.74,563.00 1110.83,563.00 1128.92,563.00 1147.01,563.00 1165.10,563.40 1183.19,563.00 1201.29,563.00 1219.38,563.00 1237.47,563.00 1255.56,563.00 1273.65,563.00 1291.74,563.00 1309.83,563.40 1327.93,563.00 1346.02,563.40 1364.11,563.00 1382.20,565.40 1382.20,577.00 749.00,577.00" fill="#7eb26d" fill-opacity="0.1"/>
<polyline points="749.00,563.60 767.09,563.00 785.18,560.20 803.27,563.00 821.37,563.00 839.46,560.00 857.55,555.40 875.64,563.40 893.73,563.00 911.82,563.00 929.91,563.00 948.01,563.40 966.10,563.00 984.19,563.00 1002.28,563.40 1020.37,563.00 1038.46,563.00 1056.55,563.00 1074.65,562.60 1092.74,563.00 1110.83,563.00 1128.92,563.00 1147.01,563.00 1165.10,563.40 1183.19,563.00 1201.29,563.00 1219.38,563.00 1237.47,563.00 1255.56,563.00 1273.65,563.00 1291.74,563.00 1309.83,563.40 1327.93,563.00 1346.02,563.40 1364.11,563.00 1382.20,565.40" fill="none" stroke="#7eb26d" stroke-width="1.5" stroke-linejoin="round"/>
<polyline points="749.00,561.60 767.09,561.00 785.18,559.40 803.27,561.00 821.37,561.00 839.46,559.00 857.55,557.00 875.64,561.00 893.73,561.00 911.82,561.00 929.91,561.00 948.01,561.00 966.10,561.00 984.19,561.00 1002.28,561.00 1020.37,561.00 1038.46,561.00 1056.55,561.00 1074.65,561.00 1092.74,561.00 1110.83,561.00 1128.92,561.00 1147.01,561.00 1165.10,561.00 1183.19,560.60 1201.29,561.00 1219.38,561.00 1237.47,561.00 1255.56,561.00 1273.65,561.00 1291.74,561.00 1309.83,561.00 1327.93,561.00 1346.02,561.00 1364.11,561.00 1382.20,561.60" fill="none" stroke="#eab839" stroke-width="1.5" stroke-linejoin="round"/>
<text x="735.50" y="541.80" font-size="12" text-anchor="end" fill="#c8c8c8" font-weight="normal" textLength="6.54" lengthAdjust="spacingAndGlyphs" >2</text>
<text x="735.50" y="561.80" font-size="12" text-anchor="end" fill="#c8c8c8" font-weight="normal" textLength="6.54" lengthAdjust="spacingAndGlyphs" >1</text>
<text x="735.50" y="581.80" font-size="12" text-anchor="end" fill="#c8c8c8" font-weight="normal" textLength="6.54" lengthAdjust="spacingAndGlyphs" >0</text>
<text x="804.10" y="594.30" font-size="12" text-anchor="middle" fill="#c8c8c8" font-weight="normal" textLength="28.90" lengthAdjust="spacingAndGlyphs" >18:30</text>
<text x="912.90" y="594.30" font-size="12" text-anchor="middle" fill="#c8c8c8" font-weight="normal" textLength="28.90" lengthAdjust="spacingAndGlyphs" >19:00</text>
<text x="1021.10" y="594.30" font-size="12" text-anchor="middle" fill="#c8c8c8" font-weight="normal" textLength="28.90" lengthAdjust="spacingAndGlyphs" >19:30</text>
<text x="1129.90" y="594.30" font-size="12" text-anchor="middle" fill="#c8c8c8" font-weight="normal" textLength="28.90" lengthAdjust="spacingAndGlyphs" >20:00</text>
<text x="1238.00" y="594.30" font-size="12" text-anchor="middle" fill="#c8c8c8" font-weight="normal" textLength="28.90" lengthAdjust="spacingAndGlyphs" >20:30</text>
<text x="1346.60" y="594.30" font-size="12" text-anchor="middle" fill="#c8c8c8" font-weight="normal" textLength="28.90" lengthAdjust="spacingAndGlyphs" >21:00</text>
<rect x="738.00" y="613.80" width="13" height="4" rx="1.5" fill="#7eb26d"/>
<text x="755.00" y="620.10" font-size="12" text-anchor="start" fill="#d8d9da" font-weight="normal" textLength="21.32" lengthAdjust="spacingAndGlyphs" >TPS</text>
<text x="783.32" y="620.10" font-size="12" text-anchor="start" fill="#d8d9da" font-weight="normal" textLength="41.47" lengthAdjust="spacingAndGlyphs" >Avg: 0.7</text>
<rect x="834.79" y="613.80" width="13" height="4" rx="1.5" fill="#eab839"/>
<text x="851.79" y="620.10" font-size="12" text-anchor="start" fill="#d8d9da" font-weight="normal" textLength="22.34" lengthAdjust="spacingAndGlyphs" >QPS</text>
<text x="881.13" y="620.10" font-size="12" text-anchor="start" fill="#d8d9da" font-weight="normal" textLength="41.47" lengthAdjust="spacingAndGlyphs" >Avg: 0.8</text>
<text x="350.50" y="663.20" font-size="14" text-anchor="middle" fill="#d8d9da" font-weight="normal" stroke="#d8d9da" stroke-width="0.45" textLength="222.67" lengthAdjust="spacingAndGlyphs" >Seq. scans (5m rate, &gt;10MB tables)</text>
<rect x="42" y="689" width="644" height="1" fill="#464648"/>
<rect x="42" y="719" width="644" height="1" fill="#464648"/>
<rect x="42" y="750" width="644" height="1" fill="#464648"/>
<rect x="100" y="689" width="1" height="61" fill="#464648"/>
<rect x="208" y="689" width="1" height="61" fill="#464648"/>
<rect x="315" y="689" width="1" height="61" fill="#464648"/>
<rect x="422" y="689" width="1" height="61" fill="#464648"/>
<rect x="530" y="689" width="1" height="61" fill="#464648"/>
<rect x="637" y="689" width="1" height="61" fill="#464648"/>
<text x="36.50" y="693.80" font-size="12" text-anchor="end" fill="#c8c8c8" font-weight="normal" textLength="16.07" lengthAdjust="spacingAndGlyphs" >1.0</text>
<text x="36.50" y="723.80" font-size="12" text-anchor="end" fill="#c8c8c8" font-weight="normal" textLength="16.07" lengthAdjust="spacingAndGlyphs" >0.5</text>
<text x="36.50" y="754.80" font-size="12" text-anchor="end" fill="#c8c8c8" font-weight="normal" textLength="6.54" lengthAdjust="spacingAndGlyphs" >0</text>
<text x="100.90" y="767.10" font-size="12" text-anchor="middle" fill="#c8c8c8" font-weight="normal" textLength="28.90" lengthAdjust="spacingAndGlyphs" >18:30</text>
<text x="208.90" y="767.10" font-size="12" text-anchor="middle" fill="#c8c8c8" font-weight="normal" textLength="28.90" lengthAdjust="spacingAndGlyphs" >19:00</text>
<text x="315.80" y="767.10" font-size="12" text-anchor="middle" fill="#c8c8c8" font-weight="normal" textLength="28.90" lengthAdjust="spacingAndGlyphs" >19:30</text>
<text x="422.80" y="767.10" font-size="12" text-anchor="middle" fill="#c8c8c8" font-weight="normal" textLength="28.90" lengthAdjust="spacingAndGlyphs" >20:00</text>
<text x="531.00" y="767.10" font-size="12" text-anchor="middle" fill="#c8c8c8" font-weight="normal" textLength="28.90" lengthAdjust="spacingAndGlyphs" >20:30</text>
<text x="637.90" y="767.10" font-size="12" text-anchor="middle" fill="#c8c8c8" font-weight="normal" textLength="28.90" lengthAdjust="spacingAndGlyphs" >21:00</text>
<text x="360.50" y="701.00" font-size="14" text-anchor="middle" fill="#d8d9da" font-weight="normal" textLength="49.12" lengthAdjust="spacingAndGlyphs" >No data</text>
<text x="1059.50" y="663.20" font-size="14" text-anchor="middle" fill="#d8d9da" font-weight="normal" stroke="#d8d9da" stroke-width="0.45" textLength="163.18" lengthAdjust="spacingAndGlyphs" >Exclusive locks (5m max.)</text>
<rect x="744" y="689" width="651" height="1" fill="#464648"/>
<rect x="744" y="722" width="651" height="1" fill="#464648"/>
<rect x="803" y="689" width="1" height="33" fill="#464648"/>
<rect x="912" y="689" width="1" height="33" fill="#464648"/>
<rect x="1020" y="689" width="1" height="33" fill="#464648"/>
<rect x="1129" y="689" width="1" height="33" fill="#464648"/>
<rect x="1237" y="689" width="1" height="33" fill="#464648"/>
<rect x="1346" y="689" width="1" height="33" fill="#464648"/>
<rect x="744" y="721" width="639" height="2" fill="#d8623b"/>
<text x="735.50" y="693.80" font-size="12" text-anchor="end" fill="#c8c8c8" font-weight="normal" textLength="6.54" lengthAdjust="spacingAndGlyphs" >1</text>
<text x="735.50" y="726.80" font-size="12" text-anchor="end" fill="#c8c8c8" font-weight="normal" textLength="6.54" lengthAdjust="spacingAndGlyphs" >0</text>
<text x="803.90" y="739.00" font-size="12" text-anchor="middle" fill="#c8c8c8" font-weight="normal" textLength="28.90" lengthAdjust="spacingAndGlyphs" >18:30</text>
<text x="912.90" y="739.00" font-size="12" text-anchor="middle" fill="#c8c8c8" font-weight="normal" textLength="28.90" lengthAdjust="spacingAndGlyphs" >19:00</text>
<text x="1021.10" y="739.00" font-size="12" text-anchor="middle" fill="#c8c8c8" font-weight="normal" textLength="28.90" lengthAdjust="spacingAndGlyphs" >19:30</text>
<text x="1129.90" y="739.00" font-size="12" text-anchor="middle" fill="#c8c8c8" font-weight="normal" textLength="28.90" lengthAdjust="spacingAndGlyphs" >20:00</text>
<text x="1238.00" y="739.00" font-size="12" text-anchor="middle" fill="#c8c8c8" font-weight="normal" textLength="28.90" lengthAdjust="spacingAndGlyphs" >20:30</text>
<text x="1346.60" y="739.00" font-size="12" text-anchor="middle" fill="#c8c8c8" font-weight="normal" textLength="28.90" lengthAdjust="spacingAndGlyphs" >21:00</text>
<defs><clipPath id="lc"><rect x="720" y="745" width="684" height="33"/></clipPath></defs>
<g clip-path="url(#lc)">
<rect x="738.00" y="758.80" width="13" height="4" rx="1.5" fill="#7eb26d"/>
<text x="755.00" y="765.10" font-size="12" text-anchor="start" fill="#d8d9da" font-weight="normal" textLength="111.19" lengthAdjust="spacingAndGlyphs" >AccessExclusiveLock</text>
<text x="873.19" y="765.10" font-size="12" text-anchor="start" fill="#d8d9da" font-weight="normal" textLength="31.94" lengthAdjust="spacingAndGlyphs" >Avg: 0</text>
<rect x="915.13" y="758.80" width="13" height="4" rx="1.5" fill="#eab839"/>
<text x="932.13" y="765.10" font-size="12" text-anchor="start" fill="#d8d9da" font-weight="normal" textLength="73.24" lengthAdjust="spacingAndGlyphs" >ExclusiveLock</text>
<text x="1012.37" y="765.10" font-size="12" text-anchor="start" fill="#d8d9da" font-weight="normal" textLength="31.94" lengthAdjust="spacingAndGlyphs" >Avg: 0</text>
<rect x="1054.31" y="758.80" width="13" height="4" rx="1.5" fill="#6ed0e0"/>
<text x="1071.31" y="765.10" font-size="12" text-anchor="start" fill="#d8d9da" font-weight="normal" textLength="95.79" lengthAdjust="spacingAndGlyphs" >RowExclusiveLock</text>
<text x="1174.10" y="765.10" font-size="12" text-anchor="start" fill="#d8d9da" font-weight="normal" textLength="31.94" lengthAdjust="spacingAndGlyphs" >Avg: 0</text>
<rect x="1216.03" y="758.80" width="13" height="4" rx="1.5" fill="#ef843c"/>
<text x="1233.03" y="765.10" font-size="12" text-anchor="start" fill="#d8d9da" font-weight="normal" textLength="125.63" lengthAdjust="spacingAndGlyphs" >ShareRowExclusiveLock</text>
<text x="1365.66" y="765.10" font-size="12" text-anchor="start" fill="#d8d9da" font-weight="normal" textLength="31.94" lengthAdjust="spacingAndGlyphs" >Avg: 0</text>
<rect x="738.00" y="778.50" width="13" height="4" rx="1.5" fill="#212124"/>
<text x="755.00" y="784.80" font-size="12" text-anchor="start" fill="#d8d9da" font-weight="normal" textLength="140.03" lengthAdjust="spacingAndGlyphs" >ShareUpdateExclusiveLock</text>
<text x="902.03" y="784.80" font-size="12" text-anchor="start" fill="#d8d9da" font-weight="normal" textLength="31.94" lengthAdjust="spacingAndGlyphs" >Avg: 0</text>
</g>
<rect x="1405" y="752" width="6" height="26" rx="3" fill="#303033"/>
<text x="18.00" y="848.00" font-size="14" text-anchor="start" fill="#d8d9da" font-weight="normal" textLength="112.37" lengthAdjust="spacingAndGlyphs" >Brought to you by:</text>
<g fill="#4fc1e9"><circle cx="155.1" cy="826.5" r="6.3"/><circle cx="187.2" cy="845.1" r="6.3"/><circle cx="155.1" cy="863.6" r="6.3"/></g>
<path d="M147.8,839.5 Q159.7,841.2 171.9,830.9 L176.4,826.4 L180.6,831.2 Q164.8,845.05 180.6,858.7 L176.4,863.8 L171.9,859.3 Q159.7,849 147.8,850.7 L144.6,845.1 Z" fill="#ffffff"/>
<g fill="#ffffff"><circle cx="144.6" cy="845.1" r="6.5"/><circle cx="176.4" cy="826.4" r="6.4"/><circle cx="176.4" cy="863.8" r="6.3"/></g>
<text x="198.5" y="855" font-size="48" fill="#ffffff" stroke="#ffffff" stroke-width="0.9" textLength="235" lengthAdjust="spacingAndGlyphs">CYBERTEC</text>
<text x="203" y="872" font-size="13" font-weight="bold" fill="#4fc1e9" textLength="227.5" lengthAdjust="spacingAndGlyphs">DATA SCIENCE &amp; POSTGRESQL</text>
</svg></body></html>
